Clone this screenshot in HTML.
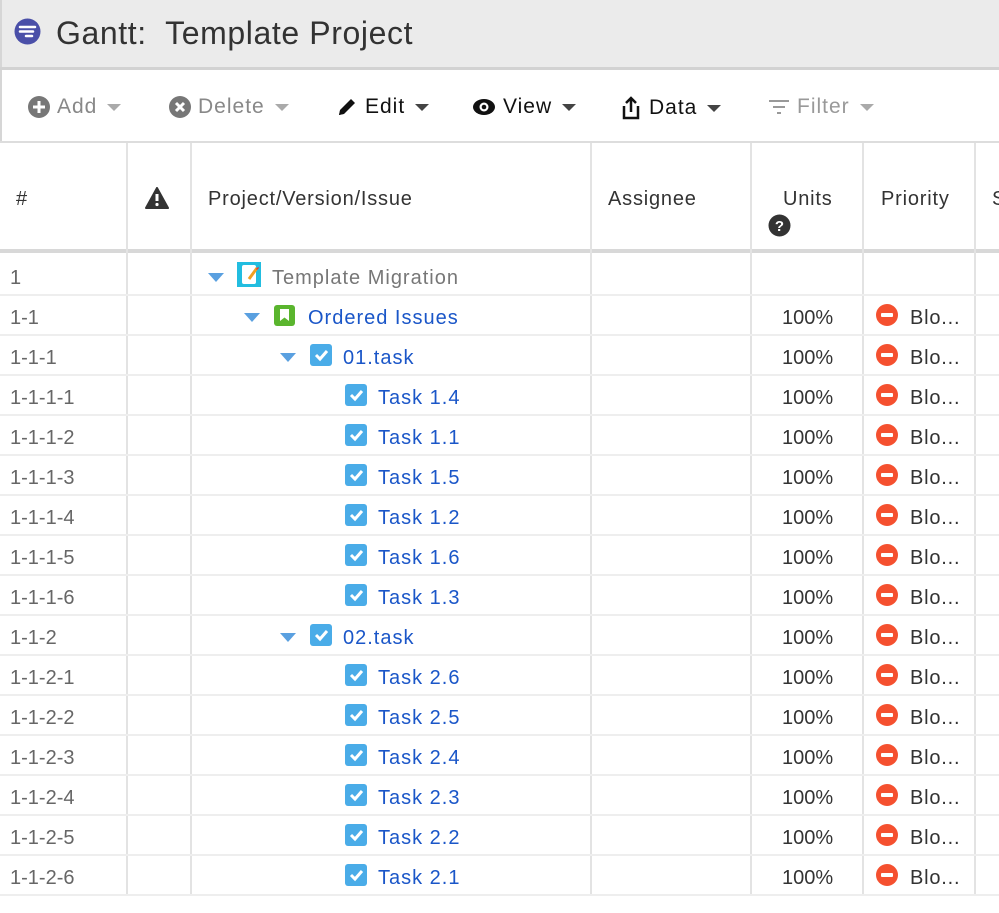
<!DOCTYPE html>
<html><head><meta charset="utf-8"><style>
*{margin:0;padding:0;box-sizing:border-box}
body{width:999px;height:913px;overflow:hidden;background:#fff;font-family:"Liberation Sans","DejaVu Sans",sans-serif;position:relative}
.a{position:absolute}
.top{left:0;top:0;width:999px;height:67px;background:#ebebeb;border-left:2px solid #d6d6d6}
.title{left:56px;top:15px;font-size:32px;color:#333;white-space:nowrap;letter-spacing:0.6px}
.tb{left:0;top:67px;width:999px;height:3px;background:#d2d2d2}
.tbar{left:0;top:70px;width:999px;height:72px;border-left:2px solid #d6d6d6}
.btn{top:95px;font-size:21px;white-space:nowrap;display:flex;align-items:center;gap:7px;letter-spacing:1px}
.car{display:inline-block;width:0;height:0;border-left:7px solid transparent;border-right:7px solid transparent;border-top:7px solid currentColor;margin-left:3px}
.hl{left:0;top:141px;width:999px;height:2px;background:#ddd}
.hb{left:0;top:249px;width:999px;height:4px;background:#d8d8d8}
.vl{width:2px;background:#e3e3e3}
.ht{font-size:20px;color:#333;white-space:nowrap;letter-spacing:0.8px}
.rl{left:0;width:999px;height:2px;background:#eee}
.id{left:10px;font-size:20px;color:#666;margin-top:2px}
.tri{width:0;height:0;border-left:8px solid transparent;border-right:8px solid transparent;border-top:9px solid #5aa0e0}
.cb{width:22px;height:22px;background:#4aace8;border-radius:3px}
.lk{font-size:20px;color:#1a56c8;white-space:nowrap;letter-spacing:1px;margin-top:2px}
.u{left:782px;font-size:20px;color:#333;margin-top:2px}
.pr{left:876px;width:22px;height:22px;border-radius:50%;background:#f5502f}
.pr:after{content:"";position:absolute;left:5px;top:9px;width:12px;height:4px;background:#fff;border-radius:1px}
.bl{left:910px;font-size:20px;color:#333;margin-top:2px;letter-spacing:0.8px}
</style></head><body>
<div class="a top"></div>
<svg class="a" style="left:14px;top:18px" width="27" height="27" viewBox="0 0 27 27"><circle cx="13.5" cy="13.5" r="13" fill="#4a4fa8"/><path d="M6 9h15M6 13.5h13M12 18h6" stroke="#fff" stroke-width="2.5" stroke-linecap="round"/></svg>
<div class="a title">Gantt:&nbsp; Template Project</div>
<div class="a tb"></div>
<div class="a tbar"></div>
<div class="a btn" style="left:28px;color:#888"><svg width="22" height="22"><circle cx="11" cy="11" r="11" fill="#777"/><path d="M11 5v12M5 11h12" stroke="#fff" stroke-width="3"/></svg>Add<span class="car" style="color:#aaa"></span></div>
<div class="a btn" style="left:169px;color:#888"><svg width="22" height="22"><circle cx="11" cy="11" r="11" fill="#777"/><path d="M7 7l8 8M15 7l-8 8" stroke="#fff" stroke-width="3"/></svg>Delete<span class="car" style="color:#aaa"></span></div>
<div class="a btn" style="left:336px;color:#111"><svg width="22" height="22"><path d="M3 19l1-5L15 3l4 4L8 18z" fill="#111"/><path d="M3 19l1-4 3 3z" fill="#111"/></svg>Edit<span class="car" style="color:#444"></span></div>
<div class="a btn" style="left:472px;color:#111"><svg width="24" height="22"><ellipse cx="12" cy="11" rx="11" ry="8" fill="#111"/><circle cx="12" cy="11" r="4.5" fill="#fff"/><circle cx="12" cy="11" r="2.3" fill="#111"/></svg>View<span class="car" style="color:#444"></span></div>
<div class="a btn" style="left:620px;color:#111"><svg width="22" height="26"><path d="M4 11v12h14V11" fill="none" stroke="#111" stroke-width="2.5"/><path d="M11 17V3M6 8l5-5 5 5" fill="none" stroke="#111" stroke-width="2.5"/></svg>Data<span class="car" style="color:#444"></span></div>
<div class="a btn" style="left:768px;color:#999"><svg width="22" height="20"><path d="M1 4h20M5 10h12M9 16h4" stroke="#999" stroke-width="2"/></svg>Filter<span class="car" style="color:#aaa"></span></div>
<div class="a hl"></div>
<div class="a hb"></div>
<div class="a vl" style="left:126px;top:143px;height:752px"></div>
<div class="a vl" style="left:190px;top:143px;height:752px"></div>
<div class="a vl" style="left:590px;top:143px;height:752px"></div>
<div class="a vl" style="left:750px;top:143px;height:752px"></div>
<div class="a vl" style="left:862px;top:143px;height:752px"></div>
<div class="a vl" style="left:974px;top:143px;height:752px"></div>
<div class="a ht" style="left:16px;top:188px">#</div>
<svg class="a" style="left:145px;top:187px" width="24" height="22"><path d="M12 1L23 21H1z" fill="#333" stroke="#333" stroke-width="2" stroke-linejoin="round"/><path d="M12 7v7" stroke="#fff" stroke-width="3"/><circle cx="12" cy="17.5" r="1.6" fill="#fff"/></svg>
<div class="a ht" style="left:208px;top:188px">Project/Version/Issue</div>
<div class="a ht" style="left:608px;top:188px">Assignee</div>
<div class="a ht" style="left:783px;top:188px">Units</div>
<svg class="a" style="left:768px;top:214px" width="23" height="23"><circle cx="11.5" cy="11.5" r="11" fill="#333"/><text x="11.5" y="17" text-anchor="middle" font-family="Liberation Sans" font-weight="bold" font-size="15" fill="#fff">?</text></svg>
<div class="a ht" style="left:881px;top:188px">Priority</div>
<div class="a ht" style="left:992px;top:188px">S</div>

<div class="a id" style="top:265px">1</div>
<div class="a tri" style="left:208px;top:273px"></div>
<div class="a" style="left:237px;top:262px;width:24px;height:25px;background:#22bde0"><div class="a" style="left:5px;top:3px;width:14px;height:19px;background:#fff;border-radius:2px"></div><svg class="a" style="left:8px;top:4px" width="14" height="17"><path d="M12 2L4 13" stroke="#f0a020" stroke-width="3"/><path d="M12 2l1 1" stroke="#e33" stroke-width="3"/></svg></div>
<div class="a lk" style="left:272px;top:265px;color:#777">Template Migration</div>
<div class="a rl" style="top:294px"></div>

<div class="a id" style="top:305px">1-1</div>
<div class="a tri" style="left:244px;top:313px"></div>
<div class="a" style="left:274px;top:305px;width:21px;height:21px;background:#5ab52e;border-radius:3px"><svg class="a" style="left:5px;top:3px" width="11" height="15"><path d="M1 1h9v12l-4.5-3.5L1 13z" fill="#fff"/></svg></div>
<div class="a lk" style="left:308px;top:305px">Ordered Issues</div>
<div class="a u" style="top:305px">100%</div><div class="a pr" style="top:304px"></div><div class="a bl" style="top:305px">Blo...</div>
<div class="a rl" style="top:334px"></div>

<div class="a id" style="top:345px">1-1-1</div>
<div class="a tri" style="left:280px;top:353px"></div>
<svg class="a cb" style="left:310px;top:344px" viewBox="0 0 22 22"><path d="M6 11l4 4 7-8" stroke="#fff" stroke-width="3" fill="none"/></svg>
<div class="a lk" style="left:343px;top:345px">01.task</div>
<div class="a u" style="top:345px">100%</div><div class="a pr" style="top:344px"></div><div class="a bl" style="top:345px">Blo...</div>
<div class="a rl" style="top:374px"></div>

<div class="a id" style="top:385px">1-1-1-1</div>
<svg class="a cb" style="left:345px;top:384px" viewBox="0 0 22 22"><path d="M6 11l4 4 7-8" stroke="#fff" stroke-width="3" fill="none"/></svg>
<div class="a lk" style="left:378px;top:385px">Task 1.4</div>
<div class="a u" style="top:385px">100%</div><div class="a pr" style="top:384px"></div><div class="a bl" style="top:385px">Blo...</div>
<div class="a rl" style="top:414px"></div>

<div class="a id" style="top:425px">1-1-1-2</div>
<svg class="a cb" style="left:345px;top:424px" viewBox="0 0 22 22"><path d="M6 11l4 4 7-8" stroke="#fff" stroke-width="3" fill="none"/></svg>
<div class="a lk" style="left:378px;top:425px">Task 1.1</div>
<div class="a u" style="top:425px">100%</div><div class="a pr" style="top:424px"></div><div class="a bl" style="top:425px">Blo...</div>
<div class="a rl" style="top:454px"></div>

<div class="a id" style="top:465px">1-1-1-3</div>
<svg class="a cb" style="left:345px;top:464px" viewBox="0 0 22 22"><path d="M6 11l4 4 7-8" stroke="#fff" stroke-width="3" fill="none"/></svg>
<div class="a lk" style="left:378px;top:465px">Task 1.5</div>
<div class="a u" style="top:465px">100%</div><div class="a pr" style="top:464px"></div><div class="a bl" style="top:465px">Blo...</div>
<div class="a rl" style="top:494px"></div>

<div class="a id" style="top:505px">1-1-1-4</div>
<svg class="a cb" style="left:345px;top:504px" viewBox="0 0 22 22"><path d="M6 11l4 4 7-8" stroke="#fff" stroke-width="3" fill="none"/></svg>
<div class="a lk" style="left:378px;top:505px">Task 1.2</div>
<div class="a u" style="top:505px">100%</div><div class="a pr" style="top:504px"></div><div class="a bl" style="top:505px">Blo...</div>
<div class="a rl" style="top:534px"></div>

<div class="a id" style="top:545px">1-1-1-5</div>
<svg class="a cb" style="left:345px;top:544px" viewBox="0 0 22 22"><path d="M6 11l4 4 7-8" stroke="#fff" stroke-width="3" fill="none"/></svg>
<div class="a lk" style="left:378px;top:545px">Task 1.6</div>
<div class="a u" style="top:545px">100%</div><div class="a pr" style="top:544px"></div><div class="a bl" style="top:545px">Blo...</div>
<div class="a rl" style="top:574px"></div>

<div class="a id" style="top:585px">1-1-1-6</div>
<svg class="a cb" style="left:345px;top:584px" viewBox="0 0 22 22"><path d="M6 11l4 4 7-8" stroke="#fff" stroke-width="3" fill="none"/></svg>
<div class="a lk" style="left:378px;top:585px">Task 1.3</div>
<div class="a u" style="top:585px">100%</div><div class="a pr" style="top:584px"></div><div class="a bl" style="top:585px">Blo...</div>
<div class="a rl" style="top:614px"></div>

<div class="a id" style="top:625px">1-1-2</div>
<div class="a tri" style="left:280px;top:633px"></div>
<svg class="a cb" style="left:310px;top:624px" viewBox="0 0 22 22"><path d="M6 11l4 4 7-8" stroke="#fff" stroke-width="3" fill="none"/></svg>
<div class="a lk" style="left:343px;top:625px">02.task</div>
<div class="a u" style="top:625px">100%</div><div class="a pr" style="top:624px"></div><div class="a bl" style="top:625px">Blo...</div>
<div class="a rl" style="top:654px"></div>

<div class="a id" style="top:665px">1-1-2-1</div>
<svg class="a cb" style="left:345px;top:664px" viewBox="0 0 22 22"><path d="M6 11l4 4 7-8" stroke="#fff" stroke-width="3" fill="none"/></svg>
<div class="a lk" style="left:378px;top:665px">Task 2.6</div>
<div class="a u" style="top:665px">100%</div><div class="a pr" style="top:664px"></div><div class="a bl" style="top:665px">Blo...</div>
<div class="a rl" style="top:694px"></div>

<div class="a id" style="top:705px">1-1-2-2</div>
<svg class="a cb" style="left:345px;top:704px" viewBox="0 0 22 22"><path d="M6 11l4 4 7-8" stroke="#fff" stroke-width="3" fill="none"/></svg>
<div class="a lk" style="left:378px;top:705px">Task 2.5</div>
<div class="a u" style="top:705px">100%</div><div class="a pr" style="top:704px"></div><div class="a bl" style="top:705px">Blo...</div>
<div class="a rl" style="top:734px"></div>

<div class="a id" style="top:745px">1-1-2-3</div>
<svg class="a cb" style="left:345px;top:744px" viewBox="0 0 22 22"><path d="M6 11l4 4 7-8" stroke="#fff" stroke-width="3" fill="none"/></svg>
<div class="a lk" style="left:378px;top:745px">Task 2.4</div>
<div class="a u" style="top:745px">100%</div><div class="a pr" style="top:744px"></div><div class="a bl" style="top:745px">Blo...</div>
<div class="a rl" style="top:774px"></div>

<div class="a id" style="top:785px">1-1-2-4</div>
<svg class="a cb" style="left:345px;top:784px" viewBox="0 0 22 22"><path d="M6 11l4 4 7-8" stroke="#fff" stroke-width="3" fill="none"/></svg>
<div class="a lk" style="left:378px;top:785px">Task 2.3</div>
<div class="a u" style="top:785px">100%</div><div class="a pr" style="top:784px"></div><div class="a bl" style="top:785px">Blo...</div>
<div class="a rl" style="top:814px"></div>

<div class="a id" style="top:825px">1-1-2-5</div>
<svg class="a cb" style="left:345px;top:824px" viewBox="0 0 22 22"><path d="M6 11l4 4 7-8" stroke="#fff" stroke-width="3" fill="none"/></svg>
<div class="a lk" style="left:378px;top:825px">Task 2.2</div>
<div class="a u" style="top:825px">100%</div><div class="a pr" style="top:824px"></div><div class="a bl" style="top:825px">Blo...</div>
<div class="a rl" style="top:854px"></div>

<div class="a id" style="top:865px">1-1-2-6</div>
<svg class="a cb" style="left:345px;top:864px" viewBox="0 0 22 22"><path d="M6 11l4 4 7-8" stroke="#fff" stroke-width="3" fill="none"/></svg>
<div class="a lk" style="left:378px;top:865px">Task 2.1</div>
<div class="a u" style="top:865px">100%</div><div class="a pr" style="top:864px"></div><div class="a bl" style="top:865px">Blo...</div>
<div class="a rl" style="top:894px"></div>
</body></html>
